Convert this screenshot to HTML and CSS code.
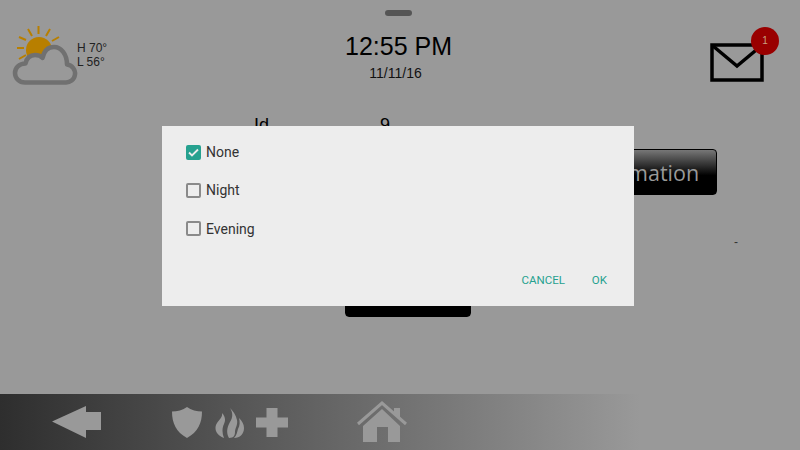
FILE: index.html
```html
<!DOCTYPE html>
<html lang="en">

<head>
    <meta charset="UTF-8">
    <meta name="viewport" content="width=device-width, initial-scale=1.0">
    <title>Panel</title>
    <link rel="stylesheet" href="styles.css">
</head>

<body>

    <div class="screen">
        <div class="handle"></div>

        <header class="top-bar">
            <div class="weather">
                <svg class="weather-icon" width="80" height="90" viewBox="0 0 80 90">
                    <path d="M38.500 26V34M28 29L32 36M50 29L46 36M19 37L26 40M59 37L52 41M17 48H24M19 59L26 55" fill="none" stroke="#b87f00" stroke-width="2"/>
                    <circle cx="39" cy="50" r="13" fill="#b87f00"/>
                    <path d="M25 82.500H65A9 9 0 0 0 67 64.500C67 54 61 47 54 47C48 47 44 51 42.500 58C41 56 38 55 35 55C29.500 55 26.500 59 25.500 63.500C19 63.500 15 68 15 73C15 78 19 82.500 25 82.500Z" fill="#999" stroke="#707070" stroke-width="4.500" stroke-linejoin="round"/>
                </svg>
                <div class="temps">
                    <div>H 70°</div>
                    <div>L 56°</div>
                </div>
            </div>

            <div class="clock">
                <div class="time">12:55 PM</div>
                <div class="date">11/11/16</div>
            </div>

            <div class="mail">
                <svg width="54" height="40" viewBox="0 0 54 40">
                    <rect x="2" y="2" width="50" height="35" fill="none" stroke="#000" stroke-width="3.500"/>
                    <path d="M3 3L27 23L51 3" fill="none" stroke="#000" stroke-width="3.500"/>
                </svg>
                <span class="badge">1</span>
            </div>
        </header>

        <main class="content">
            <div class="info-row">
                <span class="info-label">Id</span>
                <span class="info-value">9</span>
            </div>
            <div class="action-row">
                <button class="dark-button info-button">Information</button>
            </div>
            <div class="dash-row">-</div>
            <div class="save-row">
                <button class="dark-button save-button"></button>
            </div>
        </main>

        <footer class="bottom-bar">
            <svg class="back-icon" width="50" height="34" viewBox="0 0 50 34">
                <path d="M0 16.500L34 1V7H49V25H34V33Z" fill="#999"/>
            </svg>
            <svg class="shield-icon" width="30" height="31" viewBox="0 0 30 31">
                <path d="M15 0C19 3 25 4.500 30 4.500C30 16 26 25 15 31C4 25 0 16 0 4.500C5 4.500 11 3 15 0Z" fill="#999"/>
            </svg>
            <svg class="flame-icon" width="29" height="30" viewBox="0 0 29 30">
                <path d="M7 5C8 10 3 12 1 17C-1 23 3 28 9 30C7 25 7 20 9 16C11 12 10 8 7 5Z" fill="#999"/>
                <path d="M15 0C18 5 18 9 15 14C12 19 11 25 14 30C19 30 20 27 20 24C20 20 23 17 22 12C21 7 18 3 15 0Z" fill="#999"/>
                <path d="M24 10C25 14 25 17 23 21C22 24 22 27 19 30C25 30 29 26 29 20C29 16 27 13 24 10Z" fill="#999"/>
            </svg>
            <svg class="plus-icon" width="32" height="29" viewBox="0 0 32 29">
                <path d="M10.500 0H21.500V9.500H32V19.500H21.500V29H10.500V19.500H0V9.500H10.500Z" fill="#999"/>
            </svg>
            <svg class="home-icon" width="50" height="41" viewBox="0 0 50 41">
                <path d="M1 23L25 2L49 23" fill="none" stroke="#999" stroke-width="3"/>
                <path d="M6 25L25 8L43 25V41H31V26H20V41H6Z" fill="#999"/>
                <path d="M37 7H43V17L37 12Z" fill="#999"/>
            </svg>
        </footer>
    </div>

    <div class="dialog-layer">
        <div class="dialog">
            <label class="option"><span class="box checked"><svg width="15" height="15" viewBox="0 0 15 15"><path d="M3 7.500L6 10.500L12 4.500" fill="none" stroke="#ececec" stroke-width="1.800"/></svg></span>None</label>
            <label class="option"><span class="box"></span>Night</label>
            <label class="option option-last"><span class="box"></span>Evening</label>
            <div class="dialog-actions">
                <span class="text-button">CANCEL</span>
                <span class="text-button">OK</span>
            </div>
        </div>
    </div>

</body>
</html>
```

FILE: styles.css
```css
body {
    margin: 0;
    background-color: #999;
    font-family: 'Liberation Sans', Arial, sans-serif;
    color: #000;
    overflow: hidden;
}

.screen {
    width: 800px;
    height: 450px;
    display: flex;
    flex-direction: column;
}

.handle {
    width: 27px;
    height: 6px;
    margin: 10px 0 0 385px;
    border-radius: 3px;
    background-color: #555;
}

.top-bar {
    display: grid;
    grid-template-columns: 1fr auto 1fr;
    height: 78px;
}

.weather {
    display: flex;
    align-items: flex-start;
    margin-top: -16px;
}

.weather-icon {
    flex: none;
}

.temps {
    margin: 41px 0 0 -3px;
    font-size: 12px;
    line-height: 14px;
    color: #222;
}

.clock {
    text-align: center;
    padding-right: 3px;
}

.time {
    margin-top: 16px;
    font-size: 25px;
    line-height: 29px;
}

.date {
    margin-top: 4px;
    padding-right: 6px;
    font-size: 14px;
    line-height: 16px;
    color: #111;
}

.mail {
    position: relative;
    justify-self: end;
    width: 54px;
    height: 40px;
    margin: 27px 36px 0 0;
}

.badge {
    position: absolute;
    top: -16px;
    right: -15px;
    width: 28px;
    height: 28px;
    border-radius: 50%;
    background-color: #990000;
    color: #c9a080;
    font-size: 10px;
    line-height: 28px;
    text-align: center;
}

.content {
    flex: 1;
    display: flex;
    flex-direction: column;
}

.info-row {
    display: flex;
    padding: 21px 0 0 254px;
    font-size: 18px;
    line-height: 20px;
}

.info-label {
    width: 126px;
}

.action-row {
    display: flex;
    justify-content: flex-end;
    padding: 14px 83px 0 0;
}

.dark-button {
    display: block;
    border: 1px solid #000;
    border-radius: 4px;
    background: linear-gradient(#777, #000 58%);
    color: #999;
    padding: 0;
}

.info-button {
    width: 155px;
    height: 46px;
    font-family: 'Open Sans', sans-serif;
    font-size: 21.500px;
}

.dash-row {
    padding: 40px 62px 0 0;
    font-size: 12px;
    line-height: 14px;
    text-align: right;
    color: #333;
}

.save-row {
    display: flex;
    padding: 12px 0 0 345px;
}

.save-button {
    width: 126px;
    height: 56px;
}

.bottom-bar {
    height: 56px;
    flex: none;
    display: flex;
    align-items: flex-start;
    background: linear-gradient(90deg, #2e2e2e, #999 640px);
}

.back-icon {
    margin: 11px 0 0 52px;
}

.shield-icon {
    margin: 13px 0 0 70px;
}

.flame-icon {
    margin: 14px 0 0 13px;
}

.plus-icon {
    margin: 14px 0 0 12px;
}

.home-icon {
    margin: 7px 0 0 69px;
}

.dialog-layer {
    position: fixed;
    inset: 0;
}

.dialog {
    width: 472px;
    height: 180px;
    margin: 126px 0 0 162px;
    background-color: #ededed;
    display: flex;
    flex-direction: column;
    padding: 7px 27px 0 24px;
    box-sizing: border-box;
    font-family: Roboto, sans-serif;
}

.option {
    display: flex;
    align-items: center;
    gap: 5px;
    height: 38px;
    font-size: 14px;
    color: #333;
}

.option-last {
    height: 39px;
}

.box {
    width: 15px;
    height: 15px;
    box-sizing: border-box;
    border: 2px solid #8a8a8a;
    border-radius: 2px;
}

.box.checked {
    border: none;
    background-color: #26a18f;
}

.box svg {
    display: block;
}

.dialog-actions {
    display: flex;
    justify-content: flex-end;
    gap: 27px;
    margin-top: 24px;
}

.text-button {
    font-size: 11.500px;
    line-height: 16px;
    color: #26a18f;
}
```
